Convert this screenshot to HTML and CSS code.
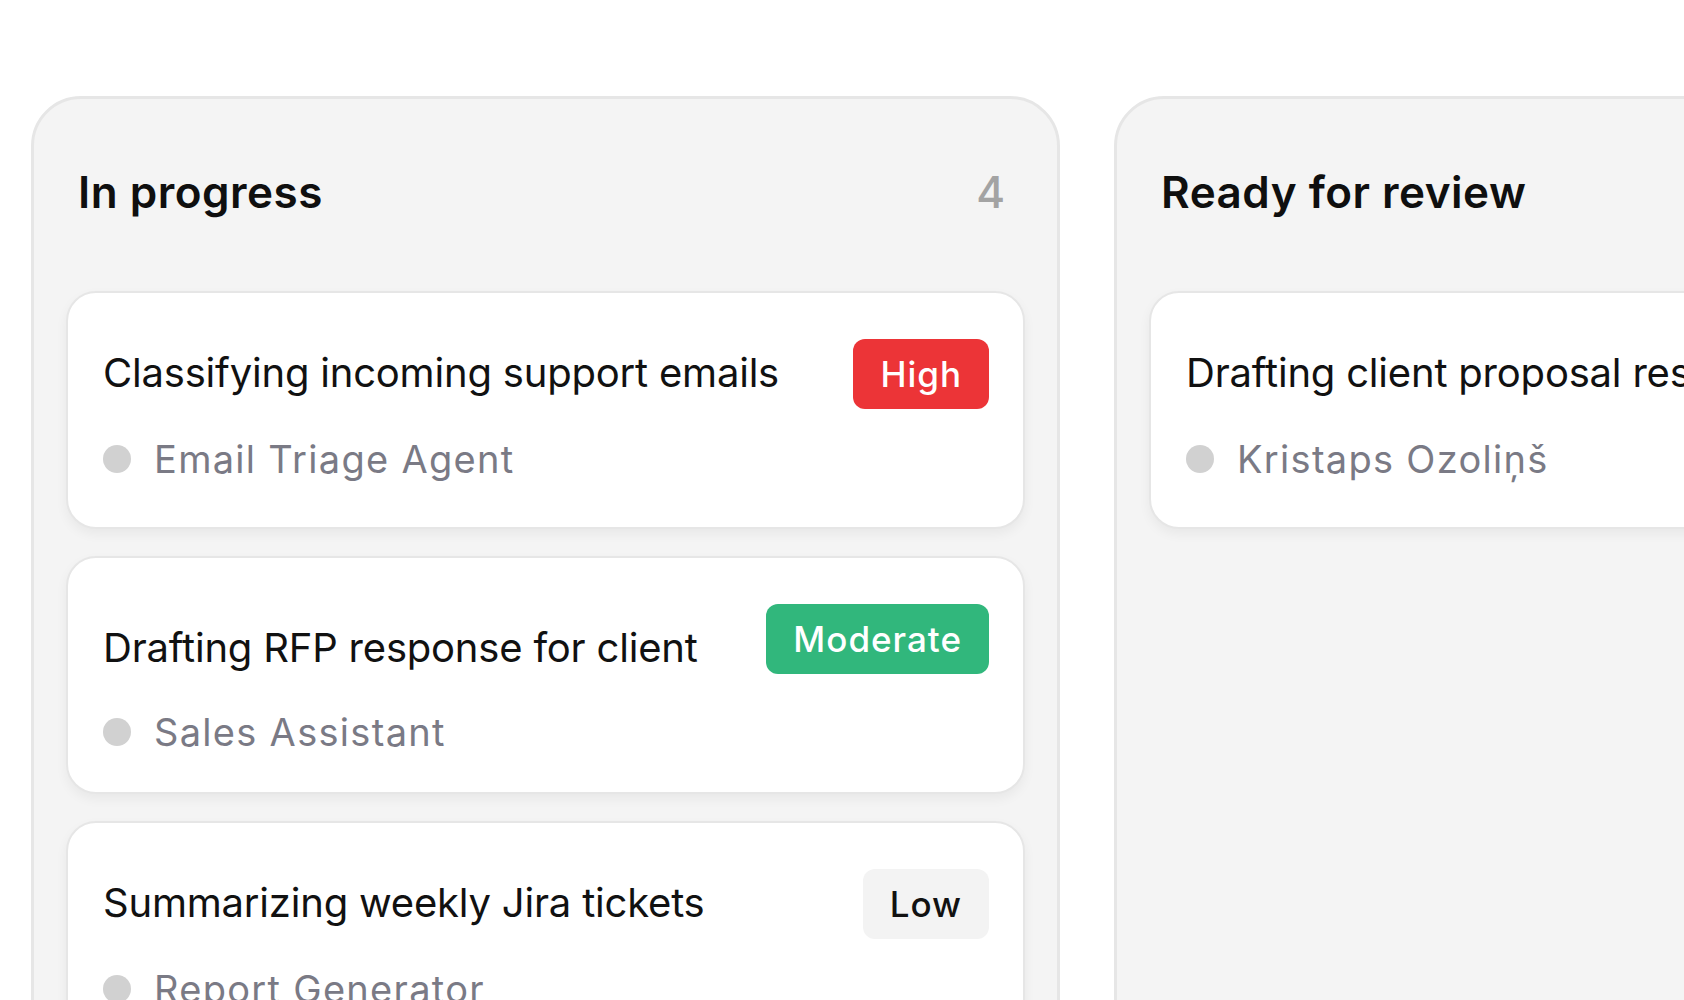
FILE: index.html
```html
<!DOCTYPE html>
<html lang="en">
    <head>
        <meta charset="UTF-8" />
        <meta name="viewport" content="width=device-width, initial-scale=1.0" />
        <title>Agent board</title>
        <link rel="stylesheet" href="styles.css">
    </head>
    <body>
        <div class="board">
            <section class="column">
                <div class="column-header">
                    <h2>In progress</h2>
                    <span class="count">4</span>
                </div>
                <div class="cards">
                    <div class="card">
                        <div class="card-header">
                            <div class="card-title">Classifying incoming support emails</div>
                            <span class="badge badge-high">High</span>
                        </div>
                        <div class="card-meta">
                            <span class="dot"></span>
                            <span>Email Triage Agent</span>
                        </div>
                    </div>
                    <div class="card">
                        <div class="card-header">
                            <div class="card-title offset">Drafting RFP response for client</div>
                            <span class="badge badge-moderate">Moderate</span>
                        </div>
                        <div class="card-meta">
                            <span class="dot"></span>
                            <span>Sales Assistant</span>
                        </div>
                    </div>
                    <div class="card">
                        <div class="card-header">
                            <div class="card-title">Summarizing weekly Jira tickets</div>
                            <span class="badge badge-low">Low</span>
                        </div>
                        <div class="card-meta">
                            <span class="dot"></span>
                            <span>Report Generator</span>
                        </div>
                    </div>
                </div>
            </section>

            <section class="column">
                <div class="column-header">
                    <h2>Ready for review</h2>
                    <span class="count">1</span>
                </div>
                <div class="cards">
                    <div class="card">
                        <div class="card-header">
                            <div class="card-title">Drafting client proposal response</div>
                        </div>
                        <div class="card-meta">
                            <span class="dot"></span>
                            <span>Kristaps Ozoliņš</span>
                        </div>
                    </div>
                </div>
            </section>
        </div>
    </body>
</html>
```

FILE: styles.css
```css
html,
body {
    overflow: hidden;
}
body {
    margin: 0;
    padding: 0;
    background-color: #fff;
    font-family: Inter, "Noto Sans", sans-serif;
    color: #111;
}
.board {
    display: flex;
    align-items: stretch;
    gap: 54px;
    padding: 96px 0 0 31px;
}
.column {
    flex: 0 0 1029px;
    box-sizing: border-box;
    min-height: 1100px;
    padding: 32px;
    background-color: #f4f4f4;
    border: 3px solid #e6e6e6;
    border-radius: 50px;
}
.column-header {
    display: flex;
    justify-content: space-between;
    padding: 35px 20px 0 12px;
    margin-bottom: 72px;
    font-size: 44px;
    line-height: 53px;
}
.column-header h2 {
    margin: 0;
    font-size: 44px;
    font-weight: 600;
    letter-spacing: 0.5px;
    color: #0f0f0f;
}
.count {
    font-weight: 500;
    color: #a3a3a3;
}
.cards {
    display: flex;
    flex-direction: column;
    gap: 27px;
}
.card {
    box-sizing: border-box;
    height: 238px;
    padding: 46px 34px 0 35px;
    background: #fff;
    border: 2px solid #e6e6e6;
    border-radius: 30px;
    box-shadow: 0 5px 12px rgba(0, 0, 0, 0.05);
}
.card-header {
    display: flex;
    justify-content: space-between;
    align-items: flex-start;
    gap: 24px;
    min-height: 70px;
}
.card-title {
    font-size: 40px;
    line-height: 68px;
    letter-spacing: -0.2px;
    white-space: nowrap;
    color: #111;
}
.card-title.offset {
    margin-top: 10px;
}
.badge {
    box-sizing: border-box;
    height: 70px;
    padding: 14px 27px;
    border-radius: 12px;
    font-size: 35px;
    line-height: 42px;
    font-weight: 500;
    letter-spacing: 1px;
    white-space: nowrap;
}
.badge-high {
    background-color: #ec3437;
    color: #fff;
}
.badge-moderate {
    background-color: #31b77c;
    color: #fff;
}
.badge-low {
    background-color: #f3f3f3;
    color: #111;
}
.card-meta {
    display: flex;
    align-items: center;
    gap: 23px;
    margin-top: 28px;
    font-size: 38px;
    line-height: 44px;
    letter-spacing: 1.3px;
    color: #7a7a85;
    white-space: nowrap;
}
.dot {
    width: 28px;
    height: 28px;
    border-radius: 50%;
    background-color: #d1d1d1;
    flex: 0 0 28px;
}
```
